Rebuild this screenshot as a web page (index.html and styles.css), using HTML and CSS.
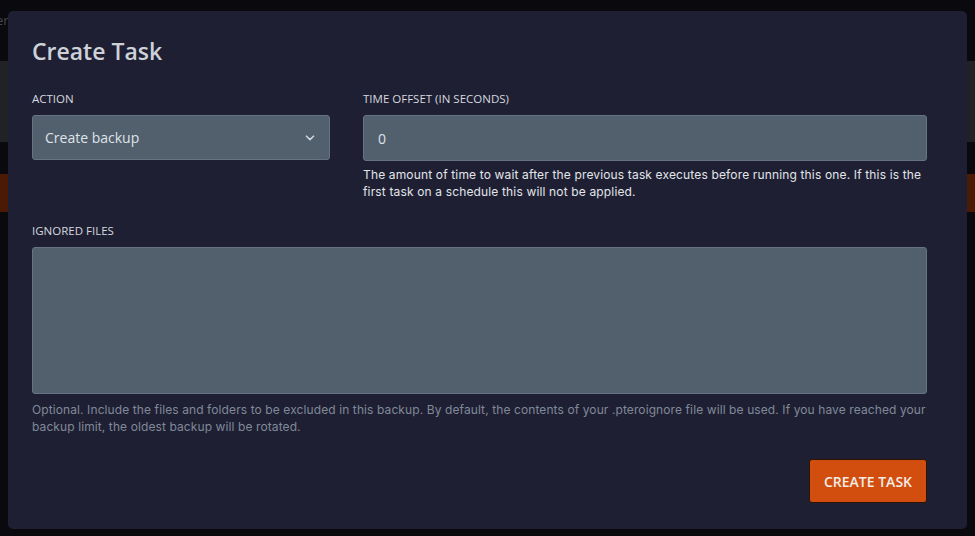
FILE: index.html
```html
<!DOCTYPE html>
<html>
<head>
<meta charset="utf-8">
<link rel="stylesheet" href="styles.css">
</head>
<body>
<div class="backdrop">
  <div class="bg-text">er</div>
  <div class="bg-band gray"></div>
  <div class="bg-band orange"></div>
</div>
<div class="modal">
  <h2 class="title">Create Task</h2>
  <div class="row">
    <div class="field">
      <label class="label">Action</label>
      <div class="select">
        <span>Create backup</span>
        <svg class="chev" width="10" height="6" viewBox="0 0 10 6"><path d="M1.5 1.2 L5 4.6 L8.5 1.2" fill="none" stroke="#cfd6dd" stroke-width="1.6" stroke-linecap="round" stroke-linejoin="round"/></svg>
      </div>
    </div>
    <div class="field">
      <label class="label">Time offset (in seconds)</label>
      <div class="input">0</div>
      <p class="help light">The amount of time to wait after the previous task executes before running this one. If this is the first task on a schedule this will not be applied.</p>
    </div>
  </div>
  <div class="field wide">
    <label class="label">Ignored files</label>
    <div class="textarea"></div>
    <p class="help muted">Optional. Include the files and folders to be excluded in this backup. By default, the contents of your .pteroignore file will be used. If you have reached your backup limit, the oldest backup will be rotated.</p>
  </div>
  <div class="actions">
    <button class="btn">Create Task</button>
  </div>
</div>
</body>
</html>
```

FILE: styles.css
```css
* { box-sizing: border-box; }
html, body { margin: 0; padding: 0; }
body {
  width: 975px;
  height: 536px;
  background: #09090e;
  font-family: "Open Sans", "Liberation Sans", sans-serif;
  overflow: hidden;
  position: relative;
}
.backdrop {
  position: absolute;
  inset: 0;
}
.bg-text {
  position: absolute;
  left: -4px;
  top: 11px;
  font-size: 13px;
  color: #45474d;
}
.bg-band { position: absolute; left: 0; right: 0; }
.bg-band.gray { top: 61px; height: 81px; background: #202226; }
.bg-band.orange { top: 174px; height: 38px; background: #4a1a04; }

.modal {
  position: absolute;
  left: 8px;
  top: 11px;
  width: 959px;
  height: 518px;
  background: #1f1f33;
  border-radius: 5px;
  padding: 24px 40px 24px 24px;
  color: #cbd2d9;
}
.title {
  margin: 0;
  font-family: "Open Sans", sans-serif;
  font-weight: 600;
  font-size: 23px;
  line-height: 32px;
  color: #cdd2d9;
  letter-spacing: 0;
}
.row {
  display: grid;
  grid-template-columns: 298px 1fr;
  column-gap: 33px;
  margin-top: 24px;
}
.field { display: flex; flex-direction: column; }
.label {
  display: block;
  font-size: 11.5px;
  text-transform: uppercase;
  color: #d4d9df;
  line-height: 16px;
  margin-bottom: 8px;
  font-weight: 500;
}
.select, .input {
  height: 46px;
  background: #525f6c;
  border: 1px solid #667380;
  border-radius: 3px;
  display: flex;
  align-items: center;
  font-size: 14px;
  color: #dfe4e9;
}
.select {
  height: 45px;
  padding: 0 14px 0 12px;
  justify-content: space-between;
}
.input { padding: 0 14px; }
.chev { margin-top: 1px; }
.help {
  margin: 5px 0 0 0;
  font-family: "Inter", "Open Sans", sans-serif;
  font-size: 12px;
  line-height: 17px;
}
.help.light { color: #e2e6ea; letter-spacing: 0.15px; }
.help.muted { color: #7f8a99; margin-top: 7px; letter-spacing: 0.1px; }
.wide { margin-top: 23px; }
.textarea {
  height: 147px;
  background: #525f6c;
  border: 1px solid #667380;
  border-radius: 3px;
}
.actions {
  display: flex;
  justify-content: flex-end;
  margin-top: 24px;
}
.btn {
  height: 44px;
  width: 118px;
  background: #d24e0e;
  border: 1px solid #2e1306;
  border-radius: 3px;
  color: #f3ece6;
  font-family: "Open Sans", sans-serif;
  font-size: 14px;
  font-weight: 600;
  text-transform: uppercase;
  letter-spacing: 0;
}
```
